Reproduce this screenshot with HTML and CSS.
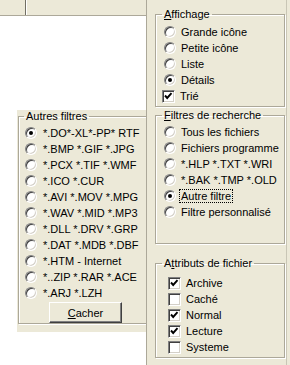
FILE: index.html
```html
<!DOCTYPE html>
<html lang="fr">
<head>
    <meta charset="UTF-8">
    <title>Options d'affichage</title>
    <link rel="stylesheet" href="styles.css">
</head>
<body>
    <div class="left">
        <div class="list-header">
            <div class="col col-first"></div>
            <div class="col"></div>
        </div>

        <div class="popup">
            <fieldset class="group group-popup">
                <legend>Autres filtres</legend>
                <div class="opt"><span class="radio on"></span>*.DO*-XL*-PP* RTF</div>
                <div class="opt"><span class="radio"></span>*.BMP *.GIF *.JPG</div>
                <div class="opt"><span class="radio"></span>*.PCX *.TIF *.WMF</div>
                <div class="opt"><span class="radio"></span>*.ICO *.CUR</div>
                <div class="opt"><span class="radio"></span>*.AVI *.MOV *.MPG</div>
                <div class="opt"><span class="radio"></span>*.WAV *.MID *.MP3</div>
                <div class="opt"><span class="radio"></span>*.DLL *.DRV *.GRP</div>
                <div class="opt"><span class="radio"></span>*.DAT *.MDB *.DBF</div>
                <div class="opt"><span class="radio"></span>*.HTM - Internet</div>
                <div class="opt"><span class="radio"></span>*..ZIP *.RAR *.ACE</div>
                <div class="opt"><span class="radio"></span>*.ARJ *.LZH</div>
                <button class="btn" type="button"><u>C</u>acher</button>
            </fieldset>
        </div>
    </div>

    <div class="right">
        <fieldset class="group group-view">
            <legend><u>A</u>ffichage</legend>
            <div class="opt"><span class="radio"></span>Grande icône</div>
            <div class="opt"><span class="radio"></span>Petite icône</div>
            <div class="opt"><span class="radio"></span>Liste</div>
            <div class="opt"><span class="radio on"></span>Détails</div>
            <div class="opt"><span class="check"><svg width="13" height="13" viewBox="0 0 13 13"><polyline points="3,5.5 5.2,8 9.5,3.2" fill="none" stroke="#000" stroke-width="1.9"/></svg></span>Trié</div>
        </fieldset>

        <fieldset class="group group-search">
            <legend><u>F</u>iltres de recherche</legend>
            <div class="opt"><span class="radio"></span>Tous les fichiers</div>
            <div class="opt"><span class="radio"></span>Fichiers programme</div>
            <div class="opt"><span class="radio"></span>*.HLP *.TXT *.WRI</div>
            <div class="opt"><span class="radio"></span>*.BAK *.TMP *.OLD</div>
            <div class="opt"><span class="radio on"></span><span class="focus">Autre filtre</span></div>
            <div class="opt"><span class="radio"></span>Filtre personnalisé</div>
        </fieldset>

        <fieldset class="group group-attr">
            <legend>A<u>t</u>tributs de fichier</legend>
            <div class="opt"><span class="check"><svg width="13" height="13" viewBox="0 0 13 13"><polyline points="3,5.5 5.2,8 9.5,3.2" fill="none" stroke="#000" stroke-width="1.9"/></svg></span>Archive</div>
            <div class="opt"><span class="check"></span>Caché</div>
            <div class="opt"><span class="check"><svg width="13" height="13" viewBox="0 0 13 13"><polyline points="3,5.5 5.2,8 9.5,3.2" fill="none" stroke="#000" stroke-width="1.9"/></svg></span>Normal</div>
            <div class="opt"><span class="check"><svg width="13" height="13" viewBox="0 0 13 13"><polyline points="3,5.5 5.2,8 9.5,3.2" fill="none" stroke="#000" stroke-width="1.9"/></svg></span>Lecture</div>
            <div class="opt"><span class="check"></span>Systeme</div>
        </fieldset>
    </div>
</body>
</html>
```

FILE: styles.css
```css
body {
    margin: 0;
    width: 290px;
    height: 365px;
    overflow: hidden;
    display: flex;
    font-family: "Liberation Sans", Arial, sans-serif;
    font-size: 11px;
    color: #000;
    background-color: #ece9d8;
}

.left {
    flex: none;
    width: 146px;
    background-color: #fff;
    display: flex;
    flex-direction: column;
}

.list-header {
    height: 15px;
    display: flex;
    background-color: #ece9d8;
    border-bottom: 1px solid #aca899;
}

.col {
    flex: 1;
}

.col-first {
    flex: none;
    width: 25px;
    border-right: 1px solid #716f64;
    box-shadow: 1px 0 0 #fff;
}

.popup {
    margin: 94px 0 0 17px;
    height: 222px;
    background-color: #ece9d8;
    padding-left: 1px;
}

.right {
    flex: none;
    width: 130px;
    border-left: 1px solid #aca899;
    border-right: 1px solid #c9c6b6;
    padding: 0 1px 0 8px;
}

.group {
    margin: 0;
    border: 1px solid #aca899;
    box-shadow: inset 1px 1px 0 #fff, 1px 1px 0 #fff;
    padding: 2px 0 2px 0;
}

.group legend {
    padding: 0 2px;
    margin-left: 6px;
    line-height: 13px;
}

.group-popup {
    height: 214px;
    box-sizing: border-box;
    border-right: none;
    padding-top: 2px;
}

.group-popup legend {
    margin-left: 5px;
}

.group-view {
    margin-top: 8px;
    padding-top: 3px;
}

.group-search {
    margin-top: 2px;
    padding-bottom: 23px;
}

.group-attr {
    margin-top: 13px;
    padding-top: 5px;
}

.opt {
    height: 16px;
    display: flex;
    align-items: center;
    white-space: nowrap;
    padding-left: 8px;
}

.group-popup .opt {
    padding-left: 6px;
}

.group-attr .opt {
    padding-left: 14px;
}

.radio {
    flex: none;
    width: 10px;
    height: 10px;
    border-radius: 50%;
    border: 1px solid;
    border-color: #808080 #fff #fff #808080;
    box-shadow: inset 1px 1px 0 #404040, inset -1px -1px 0 #d4d0c8;
    background-color: #fff;
    margin-right: 5px;
    position: relative;
}

.group-popup .radio {
    margin-right: 6px;
}

.radio.on::after {
    content: "";
    position: absolute;
    left: 3px;
    top: 3px;
    width: 4px;
    height: 4px;
    border-radius: 50%;
    background-color: #000;
}

.check {
    flex: none;
    width: 13px;
    height: 13px;
    box-sizing: border-box;
    border: 1px solid;
    border-color: #808080 #fff #fff #808080;
    box-shadow: inset 1px 1px 0 #404040, inset -1px -1px 0 #d4d0c8;
    background-color: #fff;
    margin-right: 5px;
    margin-left: -2px;
    position: relative;
}

.check svg {
    position: absolute;
    left: -1px;
    top: -1px;
}

.focus {
    outline: 1px dotted #000;
    outline-offset: 0;
    padding: 0 1px;
    margin-left: -1px;
}

.btn {
    display: block;
    margin: 1px 0 0 30px;
    width: 73px;
    height: 21px;
    padding: 0;
    font-family: inherit;
    font-size: 11px;
    color: #000;
    background-color: #ece9d8;
    border: 1px solid;
    border-color: #fff #404040 #404040 #fff;
    box-shadow: inset -1px -1px 0 #808080;
}
```
